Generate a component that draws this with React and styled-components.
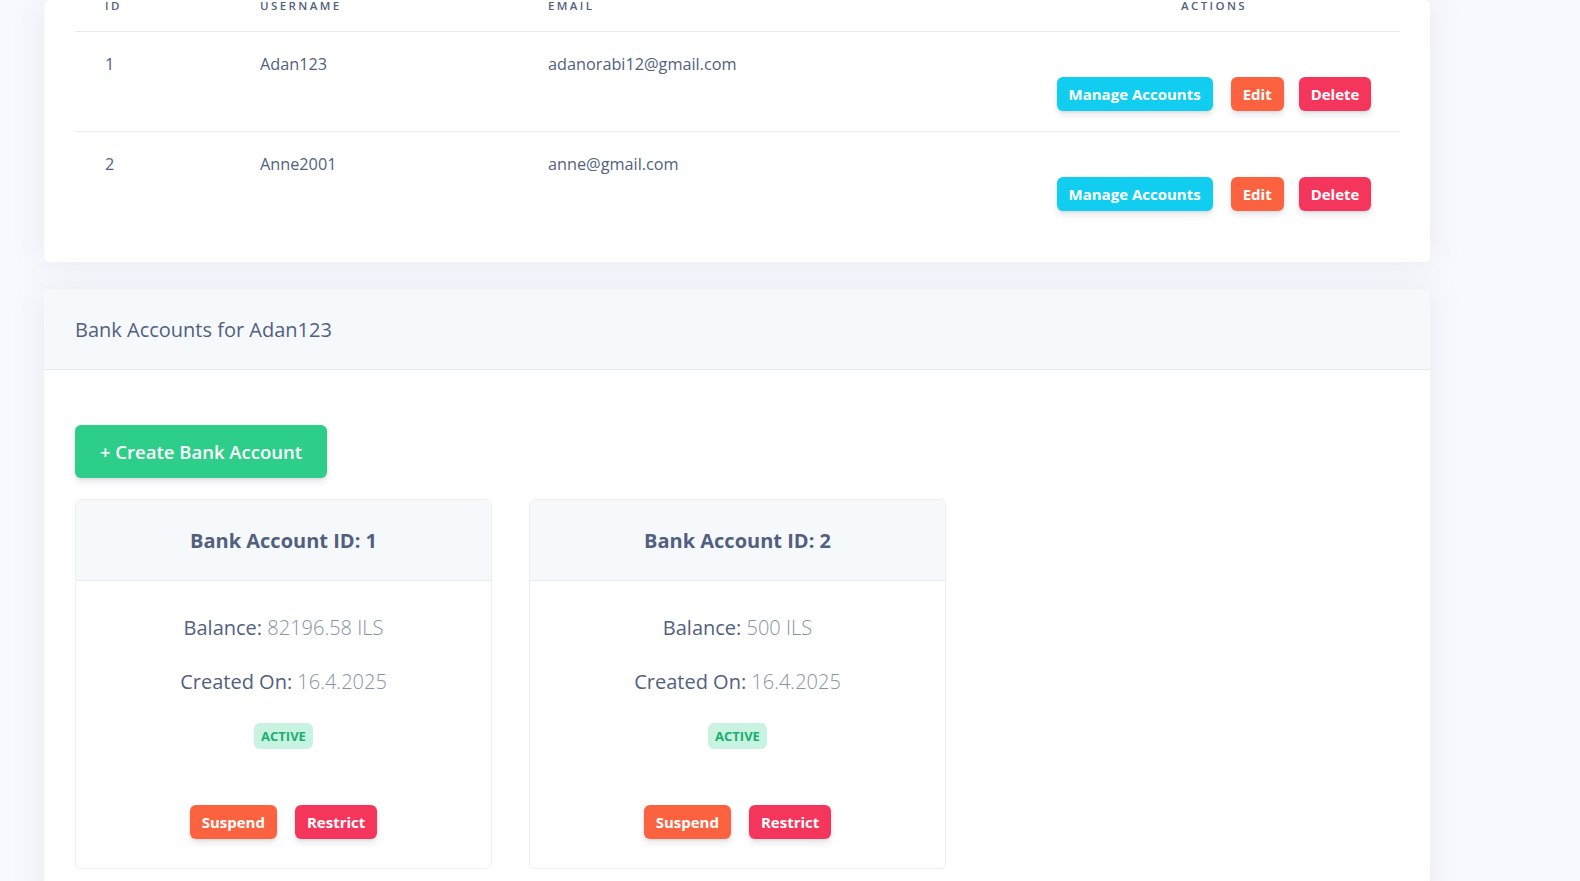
import React from 'react';
import styled, { createGlobalStyle } from 'styled-components';

const GlobalStyle = createGlobalStyle`
  html, body {
    margin: 0;
    padding: 0;
    background: #f8f9fe;
  }
  body {
    font-family: 'Open Sans', 'Liberation Sans', sans-serif;
    color: #525f7f;
    overflow: hidden;
    height: 881px;
  }
  * {
    box-sizing: border-box;
  }
`;

const Page = styled.div`
  display: flex;
  flex-direction: column;
  gap: 27px;
  width: 1386px;
  margin-left: 44px;
`;

const Card = styled.section`
  background: #fff;
  border-radius: 6px;
  box-shadow: 0 0 2rem 0 rgba(136, 152, 170, 0.15);
  overflow: hidden;
  flex-shrink: 0;
`;

const TableWrap = styled.div`
  padding: 0 30px 31px 31px;
`;

const Table = styled.table`
  width: 100%;
  border-collapse: collapse;
  table-layout: fixed;

  th {
    font-size: 11.5px;
    font-weight: 600;
    letter-spacing: 2.4px;
    text-transform: uppercase;
    color: #525f7f;
    line-height: 12px;
    padding: 0 0 19px 30px;
    text-align: left;
    border-bottom: 1px solid #e9ecef;
  }
  th.actions {
    text-align: center;
    padding-left: 0;
  }
  td {
    font-size: 16.25px;
    line-height: 24px;
    padding: 20px 0 21px 30px;
    vertical-align: top;
    border-bottom: 1px solid #e9ecef;
  }
  td.actions {
    text-align: center;
    padding: 45px 0 20px 0;
  }
  tbody tr:last-child td {
    border-bottom: none;
  }
`;

const colors = {
  info: '#11cdef',
  warning: '#fb6340',
  danger: '#f5365c',
  success: '#2dce89',
};

const Btn = styled.button`
  font-family: 'Open Sans', 'Liberation Sans', sans-serif;
  font-size: 15px;
  font-weight: 700;
  line-height: 22px;
  color: #fff;
  background: ${(p) => colors[p.$variant]};
  border: none;
  border-radius: 6px;
  padding: 6px 12px;
  box-shadow: 0 4px 6px rgba(50, 50, 93, 0.11), 0 1px 3px rgba(0, 0, 0, 0.08);
  margin-left: ${(p) => p.$gap || 0}px;
  cursor: pointer;
`;

const CardHeader = styled.header`
  height: 81px;
  display: flex;
  align-items: center;
  padding: 0 31px;
  background: #f6f9fc;
  border-bottom: 1px solid #e9ecef;
  font-size: 20px;
  font-weight: 400;
`;

const CardBody = styled.div`
  padding: 55px 31px 40px;
`;

const CreateBtn = styled.button`
  font-family: 'Open Sans', 'Liberation Sans', sans-serif;
  font-size: 18.5px;
  font-weight: 600;
  line-height: 26px;
  color: #fff;
  background: #2dce89;
  border: none;
  border-radius: 6px;
  width: 252px;
  height: 53px;
  box-shadow: 0 4px 6px rgba(50, 50, 93, 0.11), 0 1px 3px rgba(0, 0, 0, 0.08);
  cursor: pointer;
`;

const AccountGrid = styled.div`
  display: flex;
  gap: 37px;
  margin-top: 21px;
`;

const AccountCard = styled.div`
  width: 417px;
  border: 1px solid #eceef3;
  border-radius: 6px;
  overflow: hidden;
  background: #fff;
  text-align: center;
`;

const AccountHeader = styled.div`
  height: 81px;
  display: flex;
  align-items: center;
  justify-content: center;
  background: #f6f9fc;
  border-bottom: 1px solid #e9ecef;
  font-size: 20px;
  font-weight: 700;
  color: #525f7f;
`;

const AccountBody = styled.div`
  padding: 32px 20px 29px;
  display: flex;
  flex-direction: column;
  align-items: center;
`;

const Line = styled.p`
  margin: 0 0 24px;
  font-size: 20px;
  line-height: 30px;
  color: #525f7f;
  &:nth-of-type(2) {
    margin-bottom: 26px;
  }
  span {
    font-weight: 300;
    color: #8792a7;
  }
`;

const Badge = styled.span`
  display: inline-block;
  font-size: 13px;
  font-weight: 700;
  line-height: 14px;
  text-transform: uppercase;
  color: #1aae6f;
  background: #c9f3e1;
  border-radius: 6px;
  padding: 6px 7px;
`;

const Actions = styled.div`
  margin-top: 56px;
  display: flex;
  justify-content: center;
`;

const users = [
  { id: 1, username: 'Adan123', email: 'adanorabi12@gmail.com' },
  { id: 2, username: 'Anne2001', email: 'anne@gmail.com' },
];

const accounts = [
  { id: 1, balance: '82196.58', created: '16.4.2025' },
  { id: 2, balance: '500', created: '16.4.2025' },
];

export default function App() {
  return (
    <>
      <GlobalStyle />
      <Page>
        <Card>
          <TableWrap>
            <Table>
              <colgroup>
                <col style={{ width: 155 }} />
                <col style={{ width: 288 }} />
                <col style={{ width: 510 }} />
                <col />
              </colgroup>
              <thead>
                <tr>
                  <th>ID</th>
                  <th>Username</th>
                  <th>Email</th>
                  <th className='actions'>Actions</th>
                </tr>
              </thead>
              <tbody>
                {users.map((u) => (
                  <tr key={u.id}>
                    <td>{u.id}</td>
                    <td>{u.username}</td>
                    <td>{u.email}</td>
                    <td className='actions'>
                      <Btn $variant='info'>Manage Accounts</Btn>
                      <Btn $variant='warning' $gap={18}>
                        Edit
                      </Btn>
                      <Btn $variant='danger' $gap={15}>
                        Delete
                      </Btn>
                    </td>
                  </tr>
                ))}
              </tbody>
            </Table>
          </TableWrap>
        </Card>

        <Card>
          <CardHeader>Bank Accounts for Adan123</CardHeader>
          <CardBody>
            <CreateBtn>+ Create Bank Account</CreateBtn>
            <AccountGrid>
              {accounts.map((a) => (
                <AccountCard key={a.id}>
                  <AccountHeader>Bank Account ID: {a.id}</AccountHeader>
                  <AccountBody>
                    <Line>
                      Balance: <span>{a.balance} ILS</span>
                    </Line>
                    <Line>
                      Created On: <span>{a.created}</span>
                    </Line>
                    <Badge>Active</Badge>
                    <Actions>
                      <Btn $variant='warning'>Suspend</Btn>
                      <Btn $variant='danger' $gap={18}>
                        Restrict
                      </Btn>
                    </Actions>
                  </AccountBody>
                </AccountCard>
              ))}
            </AccountGrid>
          </CardBody>
        </Card>
      </Page>
    </>
  );
}
